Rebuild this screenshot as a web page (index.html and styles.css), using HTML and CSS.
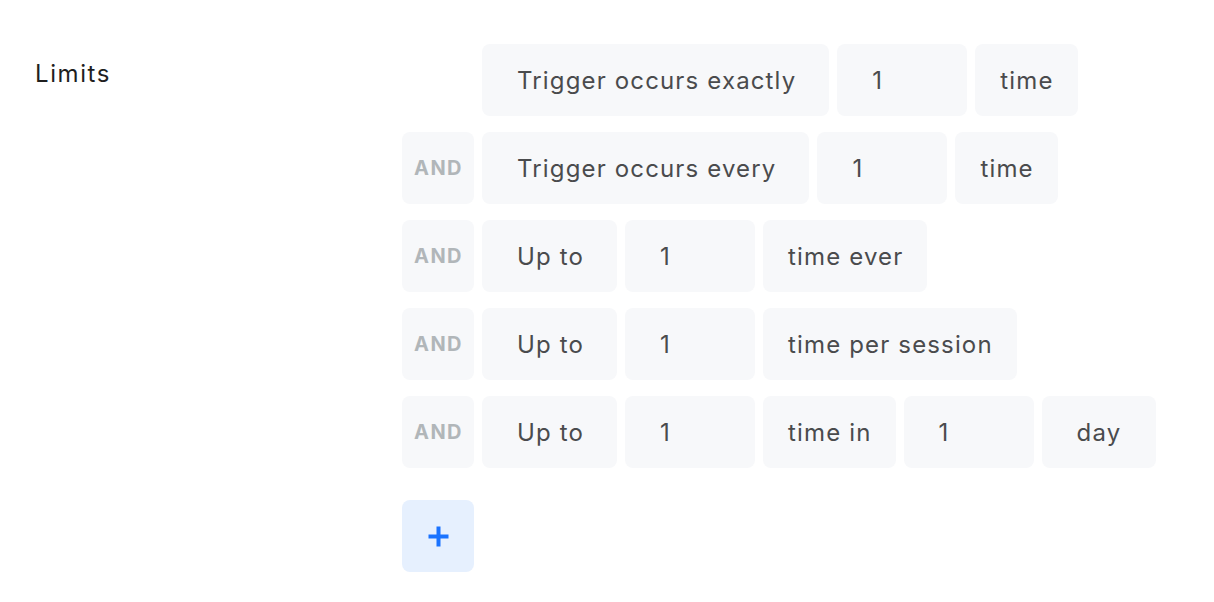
FILE: index.html
```html
<!DOCTYPE html>
<html>
<head>
<meta charset="utf-8">
<link rel="stylesheet" href="styles.css">
</head>
<body>
<div class="field">
  <div class="label">Limits</div>
  <div class="rules">
    <div class="row">
      <div class="conj empty"></div>
      <div class="chip">Trigger occurs exactly</div>
      <div class="chip num">1</div>
      <div class="chip unit">time</div>
    </div>
    <div class="row">
      <div class="conj">AND</div>
      <div class="chip">Trigger occurs every</div>
      <div class="chip num">1</div>
      <div class="chip unit">time</div>
    </div>
    <div class="row">
      <div class="conj">AND</div>
      <div class="chip">Up to</div>
      <div class="chip num">1</div>
      <div class="chip unit">time ever</div>
    </div>
    <div class="row">
      <div class="conj">AND</div>
      <div class="chip">Up to</div>
      <div class="chip num">1</div>
      <div class="chip unit">time per session</div>
    </div>
    <div class="row">
      <div class="conj">AND</div>
      <div class="chip">Up to</div>
      <div class="chip num">1</div>
      <div class="chip unit">time in</div>
      <div class="chip num">1</div>
      <div class="chip period">day</div>
    </div>
    <div class="row add-row">
      <button class="add" type="button" aria-label="Add limit">
        <svg width="21" height="21" viewBox="0 0 21 21"><path d="M10.5 0.5v20M0.5 10.5h20" stroke="#1a73ff" stroke-width="4" fill="none"/></svg>
      </button>
    </div>
  </div>
</div>
</body>
</html>
```
FILE: styles.css
```css
html, body {
  margin: 0;
  padding: 0;
  background: #ffffff;
  font-family: "Inter", "Liberation Sans", sans-serif;
}
.field {
  display: flex;
  padding: 44px 0 0 35px;
}
.label {
  width: 367px;
  font-size: 24px;
  color: #1f1f1f;
  letter-spacing: 1.6px;
  padding-top: 14px;
  line-height: 32px;
}
.rules {
  display: flex;
  flex-direction: column;
  gap: 16px;
}
.row {
  display: flex;
  gap: 8px;
}
.conj, .chip, .add {
  height: 72px;
  border-radius: 8px;
  box-sizing: border-box;
  display: flex;
  align-items: center;
}
.conj {
  width: 72px;
  justify-content: center;
  background: #f7f8fa;
  color: #b1b6b9;
  font-weight: 700;
  font-size: 20px;
  letter-spacing: 1.4px;
  padding-left: 1px;
}
.conj.empty {
  background: transparent;
}
.chip {
  background: #f7f8fa;
  color: #4a4b4d;
  font-size: 24px;
  letter-spacing: 1.15px;
  padding: 0 33px 0 35px;
  white-space: nowrap;
}
.chip.num {
  width: 130px;
}
.chip.unit {
  padding: 0 24px 0 25px;
}
.chip.period {
  padding: 0 35px 0 35px;
}
.add-row {
  margin-top: 16px;
}
.add {
  width: 72px;
  justify-content: center;
  background: #e6f0fe;
  border: none;
  padding: 0;
  cursor: pointer;
}
```
